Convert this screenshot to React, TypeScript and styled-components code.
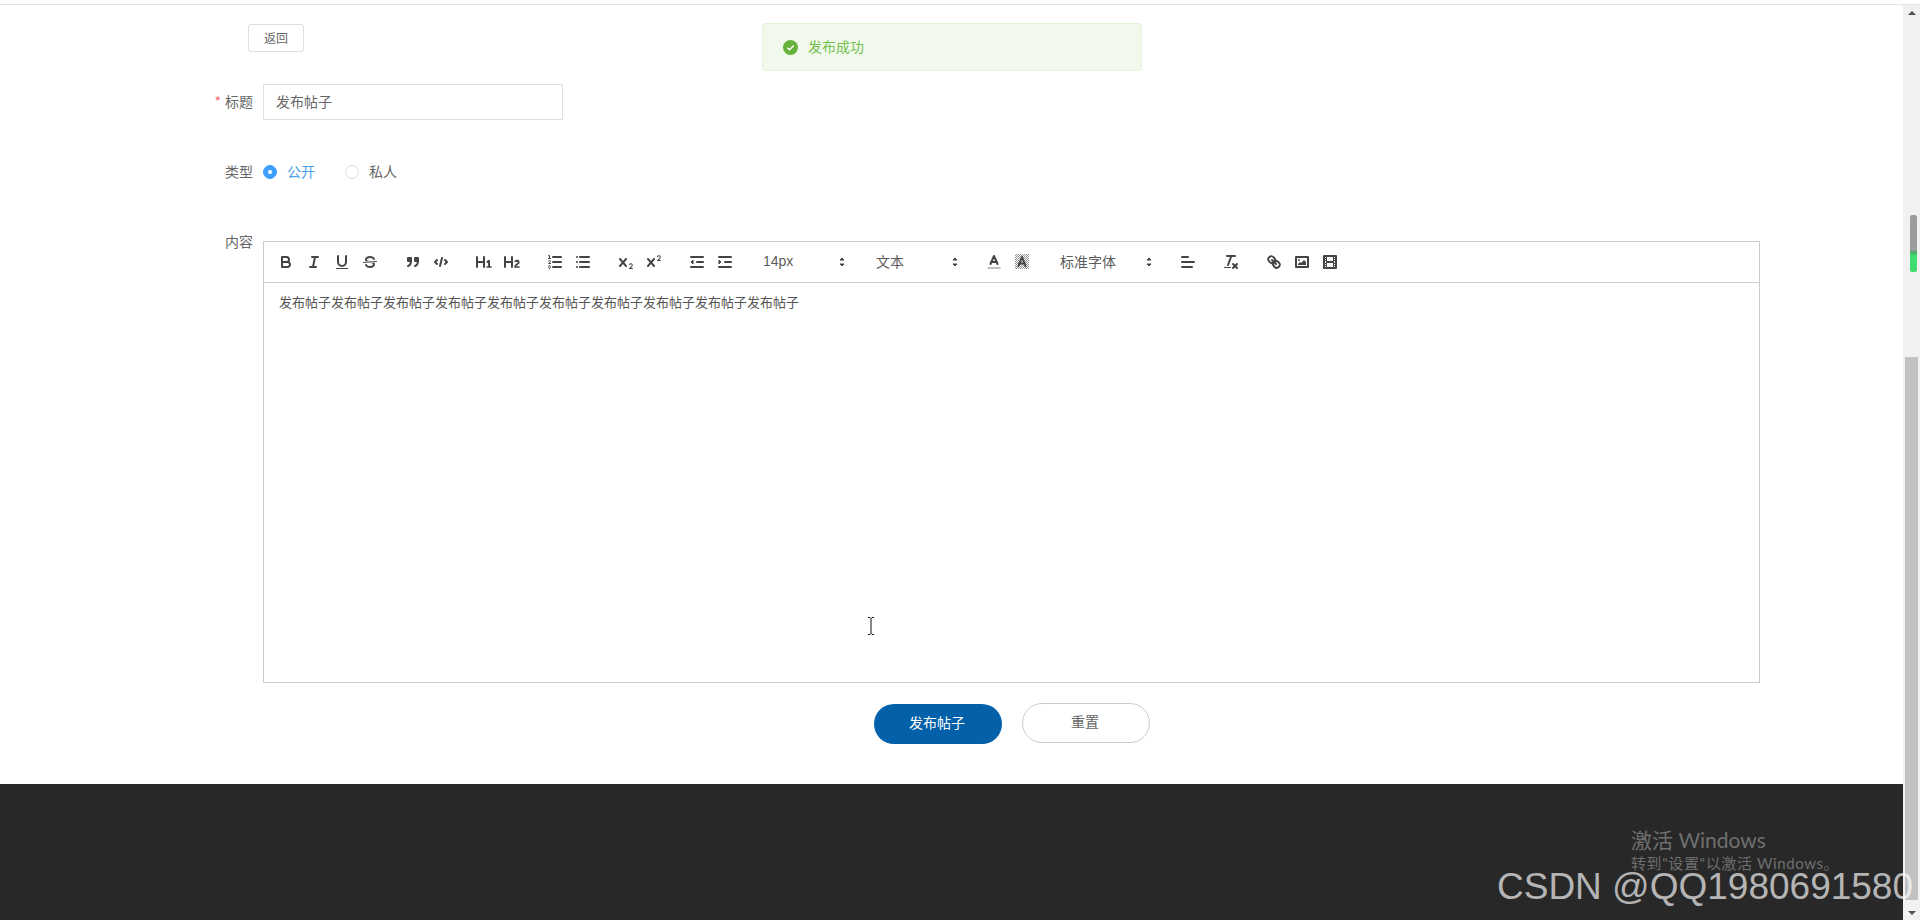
import React from "react";
import styled, { createGlobalStyle } from "styled-components";

const GlobalStyle = createGlobalStyle`
  html, body {
    margin: 0;
    padding: 0;
    height: 100%;
    overflow: hidden;
    background: #fff;
  }
  body {
    font-family: "Noto Sans CJK SC", "Liberation Sans", sans-serif;
    color: #666;
  }
  * { box-sizing: border-box; }
`;

const Root = styled.div`
  position: relative;
  width: 1920px;
  height: 920px;
  overflow: hidden;
  display: flex;
  flex-direction: column;
`;

const TopLine = styled.div`
  height: 5px;
  flex: none;
  border-bottom: 1px solid #e4e4e4;
`;

const Body = styled.div`
  flex: 1;
  display: flex;
  min-height: 0;
`;

const Page = styled.main`
  flex: 1;
  min-width: 0;
  display: flex;
  flex-direction: column;
`;

const Form = styled.form`
  flex: 1;
  padding: 19px 0 0 188px;
  display: flex;
  flex-direction: column;
`;

const BackButton = styled.button`
  width: 56px;
  height: 28px;
  margin: 0 0 30px 60px;
  padding: 0 0 2px;
  background: #fff;
  border: 1px solid #dcdfe6;
  border-radius: 3px;
  color: #666;
  font: 12px "Noto Sans CJK SC", sans-serif;
`;

const Row = styled.div`
  display: flex;
  margin-bottom: 30px;
`;

const Label = styled.label`
  width: 75px;
  height: 40px;
  flex: none;
  padding-right: 10px;
  text-align: right;
  font-size: 14px;
  line-height: 38px;
  color: #666;
`;

const Star = styled.span`
  color: #f56c6c;
  margin-right: 4px;
`;

const Field = styled.div`
  width: 1497px;
  display: flex;
  flex-direction: column;
`;

const TitleInput = styled.input`
  width: 300px;
  height: 36px;
  margin-top: 2px;
  padding: 0 12px 2px;
  border: 1px solid #dcdfe6;
  border-radius: 1px;
  outline: none;
  color: #666;
  font: 14px "Noto Sans CJK SC", sans-serif;
`;

const RadioGroup = styled.div`
  display: flex;
  align-items: center;
  height: 40px;
  gap: 30px;
`;

const RadioItem = styled.span<{ $on?: boolean }>`
  display: flex;
  align-items: center;
  gap: 10px;
  font-size: 14px;
  color: ${(p) => (p.$on ? "#4a9fe8" : "#666")};
`;

const RadioText = styled.span`
  padding-bottom: 2px;
`;

const RadioDot = styled.span<{ $on?: boolean }>`
  width: 14px;
  height: 14px;
  border-radius: 50%;
  display: flex;
  align-items: center;
  justify-content: center;
  border: 1px solid ${(p) => (p.$on ? "#409eff" : "#dcdfe6")};
  background: ${(p) => (p.$on ? "#409eff" : "#fff")};
  &::after {
    content: "";
    width: 4px;
    height: 4px;
    border-radius: 50%;
    background: #fff;
  }
`;

const Editor = styled.div`
  margin-top: 19px;
  height: 442px;
  border: 1px solid #ccc;
  display: flex;
  flex-direction: column;
`;

const Toolbar = styled.div`
  height: 41px;
  flex: none;
  padding: 8px;
  border-bottom: 1px solid #ccc;
  display: flex;
  font-family: "Liberation Sans", "Noto Sans CJK SC", sans-serif;
`;

const Group = styled.span`
  display: flex;
  margin-right: 15px;
`;

const ToolButton = styled.button`
  width: 28px;
  height: 24px;
  padding: 3px 5px;
  background: none;
  border: 0;
  display: block;
`;

const Icon = styled.svg`
  display: block;
  width: 18px;
  height: 18px;
  .s {
    fill: none;
    stroke: #444;
    stroke-width: 2;
    stroke-linecap: round;
    stroke-linejoin: round;
    stroke-miterlimit: 10;
  }
  .t { stroke-width: 1; }
  .f { fill: #444; }
  .c { stroke: #aaa; stroke-width: 1.5; }
`;

const Picker = styled.span<{ $w: number }>`
  position: relative;
  width: ${(p) => p.$w}px;
  height: 24px;
  margin-right: 15px;
  padding: 0 0 2px 9px;
  display: flex;
  align-items: center;
  color: #5c5c5c;
  font-size: 14px;
  svg {
    position: absolute;
    right: 1px;
    top: 3px;
  }
`;

const Content = styled.div`
  padding: 10px 15px;
  font-size: 13px;
  line-height: 1.42;
  color: #555;
`;

const Actions = styled.div`
  display: flex;
  justify-content: center;
  align-items: flex-start;
  gap: 20px;
  margin-top: 20px;
  padding-left: 1px;
`;

const PillButton = styled.button<{ $primary?: boolean }>`
  width: 128px;
  height: 40px;
  margin-top: ${(p) => (p.$primary ? "1px" : "0")};
  padding: 0 2px 4px 0;
  border-radius: 20px;
  border: ${(p) => (p.$primary ? "0" : "1px solid #ccc")};
  background: ${(p) => (p.$primary ? "#0360a9" : "#fff")};
  color: ${(p) => (p.$primary ? "#fff" : "#666")};
  font: 14px "Noto Sans CJK SC", sans-serif;
`;

const Footer = styled.footer`
  height: 136px;
  flex: none;
  background: #282828;
`;

const Scrollbar = styled.aside`
  position: relative;
  width: 17px;
  flex: none;
  background: #f1f1f1;
  display: flex;
  flex-direction: column;
  align-items: center;
`;

const ArrowUp = styled.span`
  margin-top: 6px;
  width: 0;
  height: 0;
  border-left: 4px solid transparent;
  border-right: 4px solid transparent;
  border-bottom: 4px solid #505050;
`;

const ArrowDown = styled.span`
  margin-top: 11px;
  width: 0;
  height: 0;
  border-left: 4px solid transparent;
  border-right: 4px solid transparent;
  border-top: 4px solid #505050;
`;

const Thumb = styled.div`
  width: 13px;
  height: 543px;
  margin-top: 342px;
  background: #c1c1c1;
`;

const Meter = styled.div`
  position: absolute;
  left: 7px;
  top: 210px;
  width: 7px;
  height: 57px;
  border-radius: 2px;
  background: linear-gradient(#9d9d9d 0 35px, #4aa868 37px, #3edd70 41px);
`;

const Toast = styled.div`
  position: absolute;
  left: 762px;
  top: 23px;
  width: 380px;
  height: 48px;
  padding: 0 0 2px 20px;
  display: flex;
  align-items: center;
  gap: 10px;
  background: #f0f9eb;
  border: 1px solid #e1f3d8;
  border-radius: 4px;
  color: #74bf4e;
  font-size: 14px;
`;

const ToastIcon = styled.svg`
  width: 15px;
  height: 15px;
  flex: none;
  margin-top: 2px;
`;

const TextCursor = styled.svg`
  position: absolute;
  left: 866px;
  top: 616px;
  width: 10px;
  height: 20px;
`;

const ActivateNote = styled.div`
  position: absolute;
  left: 1631px;
  top: 826px;
  color: #6f6f6f;
  font-family: "Lato", "Noto Sans CJK SC", sans-serif;
`;

const ActivateTitle = styled.div`
  font-size: 21px;
  line-height: 28px;
`;

const ActivateHint = styled.div`
  margin-top: -1px;
  font-size: 15px;
  line-height: 20px;
  letter-spacing: 0.6px;
`;

const Watermark = styled.div`
  position: absolute;
  left: 1497px;
  top: 865px;
  color: rgba(255, 255, 255, 0.66);
  font: 37px/44px "Liberation Sans", sans-serif;
  white-space: nowrap;
`;

const Svg = ({ children }: { children: React.ReactNode }) => (
  <Icon viewBox="0 0 18 18">{children}</Icon>
);

const Lines = ({ x1, ys }: { x1: number[]; ys: number[] }) => (
  <>
    {ys.map((y, i) => (
      <line key={y} className="s" x1={x1[i]} x2={15} y1={y} y2={y} />
    ))}
  </>
);

const Arrows = () => (
  <Svg>
    <polygon className="f" stroke="#444" strokeLinejoin="round" points="7 11 9 13 11 11 7 11" />
    <polygon className="f" stroke="#444" strokeLinejoin="round" points="7 7 9 5 11 7 7 7" />
  </Svg>
);

const ICONS: Record<string, React.ReactNode> = {
  bold: (
    <>
      <path className="s" d="M5,4H9.5A2.5,2.5,0,0,1,12,6.5v0A2.5,2.5,0,0,1,9.5,9H5A0,0,0,0,1,5,9V4A0,0,0,0,1,5,4Z" />
      <path className="s" d="M5,9h5.5A2.5,2.5,0,0,1,13,11.5v0A2.5,2.5,0,0,1,10.5,14H5a0,0,0,0,1,0,0V9A0,0,0,0,1,5,9Z" />
    </>
  ),
  italic: (
    <>
      <line className="s" x1="7" x2="13" y1="4" y2="4" />
      <line className="s" x1="5" x2="11" y1="14" y2="14" />
      <line className="s" x1="8" x2="10" y1="14" y2="4" />
    </>
  ),
  underline: (
    <>
      <path className="s" d="M5,3V9a4.012,4.012,0,0,0,4,4H9a4.012,4.012,0,0,0,4-4V3" />
      <rect className="f" height="1" rx=".5" ry=".5" width="12" x="3" y="15" />
    </>
  ),
  strike: (
    <>
      <line className="s t" x1="15.5" x2="2.5" y1="8.5" y2="9.5" />
      <path className="f" d="M9.007,8C6.542,7.791,6,7.519,6,6.5,6,5.792,7.283,5,9,5c1.571,0,2.765.679,2.969,1.309a1,1,0,0,0,1.9-.617C13.356,4.106,11.354,3,9,3,6.2,3,4,4.538,4,6.5a3.2,3.2,0,0,0,.5,1.843Z" />
      <path className="f" d="M8.984,10C11.457,10.208,12,10.479,12,11.5c0,.708-1.283,1.5-3,1.5-1.571,0-2.765-.679-2.969-1.309a1,1,0,1,0-1.9.617C4.644,13.894,6.646,15,9,15c2.8,0,5-1.538,5-3.5a3.2,3.2,0,0,0-.5-1.843Z" />
    </>
  ),
  quote: (
    <>
      <rect className="f" stroke="#444" strokeWidth="2" strokeLinejoin="round" height="3" width="3" x="4" y="5" />
      <rect className="f" stroke="#444" strokeWidth="2" strokeLinejoin="round" height="3" width="3" x="11" y="5" />
      <path className="s" d="M7,8c0,4.031-3,5-3,5" />
      <path className="s" d="M14,8c0,4.031-3,5-3,5" />
    </>
  ),
  code: (
    <>
      <polyline className="s" points="5 7 3 9 5 11" />
      <polyline className="s" points="13 7 15 9 13 11" />
      <line className="s" x1="10" x2="8" y1="5" y2="13" />
    </>
  ),
  h1: (
    <path className="f" d="M10,4V14a1,1,0,0,1-2,0V10H3v4a1,1,0,0,1-2,0V4A1,1,0,0,1,3,4V8H8V4a1,1,0,0,1,2,0Zm6.06787,9.209H14.98975V7.59863a.54085.54085,0,0,0-.605-.60547h-.62744a1.01119,1.01119,0,0,0-.748.29688L11.645,8.56641a.5435.5435,0,0,0-.022.8584l.28613.30762a.53861.53861,0,0,0,.84717.0332l.09912-.08789a1.2137,1.2137,0,0,0,.2417-.35254h.02246s-.01123.30859-.01123.60547V13.209H12.041a.54085.54085,0,0,0-.605.60547v.43945a.54085.54085,0,0,0,.605.60547h4.02686a.54085.54085,0,0,0,.605-.60547v-.43945A.54085.54085,0,0,0,16.06787,13.209Z" />
  ),
  h2: (
    <path className="f" d="M16.73975,13.81445v.43945a.54085.54085,0,0,1-.605.60547H11.855a.58392.58392,0,0,1-.64893-.60547V14.0127c0-2.90527,3.39941-3.42187,3.39941-4.55469a.77675.77675,0,0,0-.84717-.78125,1.17684,1.17684,0,0,0-.83594.38477c-.2749.26367-.561.374-.85791.13184l-.4292-.34082c-.30811-.24219-.38525-.51758-.1543-.81445a2.97155,2.97155,0,0,1,2.45361-1.17676,2.45393,2.45393,0,0,1,2.68408,2.40918c0,2.45312-3.1792,2.92676-3.27832,3.93848h2.79443A.54085.54085,0,0,1,16.73975,13.81445ZM9,3A.99974.99974,0,0,0,8,4V8H3V4A1,1,0,0,0,1,4V14a1,1,0,0,0,2,0V10H8v4a1,1,0,0,0,2,0V4A.99974.99974,0,0,0,9,3Z" />
  ),
  ordered: (
    <>
      <Lines x1={[7, 7, 7]} ys={[4, 9, 14]} />
      <line className="s t" x1="2.5" x2="4.5" y1="5.5" y2="5.5" />
      <path className="f" d="M3.5,6A0.5,0.5,0,0,1,3,5.5V3.085l-0.276.138A0.5,0.5,0,0,1,2.053,3c-0.124-.247-0.023-0.324.224-0.447l1-.5A0.5,0.5,0,0,1,4,2.5v3A0.5,0.5,0,0,1,3.5,6Z" />
      <path className="s t" d="M4.5,10.5h-2c0-.234,1.85-1.076,1.85-2.234A0.959,0.959,0,0,0,2.5,8.156" />
      <path className="s t" d="M2.5,14.846a0.959,0.959,0,0,0,1.85-.109A0.7,0.7,0,0,0,3.75,14a0.688,0.688,0,0,0,.6-0.736,0.959,0.959,0,0,0-1.85-.109" />
    </>
  ),
  bullet: (
    <>
      <Lines x1={[6, 6, 6]} ys={[4, 9, 14]} />
      <line className="s" x1="3" x2="3" y1="4" y2="4" />
      <line className="s" x1="3" x2="3" y1="9" y2="9" />
      <line className="s" x1="3" x2="3" y1="14" y2="14" />
    </>
  ),
  sub: (
    <>
      <path className="f" d="M15.5,15H13.861a3.858,3.858,0,0,0,1.914-2.975,1.8,1.8,0,0,0-1.6-1.751A1.921,1.921,0,0,0,12.021,11.7a0.50013,0.50013,0,1,0,.957.291h0a0.914,0.914,0,0,1,1.053-.725,0.81,0.81,0,0,1,.744.762c0,1.076-1.16971,1.86982-1.93971,2.43082A1.45639,1.45639,0,0,0,12,15.5a0.5,0.5,0,0,0,.5.5h3A0.5,0.5,0,0,0,15.5,15Z" />
      <path className="f" d="M9.65,5.241a1,1,0,0,0-1.409.108L6,7.964,3.759,5.349A1,1,0,0,0,2.192,6.59178Q2.21541,6.6213,2.241,6.649L4.684,9.5,2.241,12.35A1,1,0,0,0,3.71,13.70722q0.02557-.02768.049-0.05722L6,11.036,8.241,13.65a1,1,0,1,0,1.567-1.24277Q9.78459,12.3777,9.759,12.35L7.316,9.5,9.759,6.651A1,1,0,0,0,9.65,5.241Z" />
    </>
  ),
  sup: (
    <>
      <path className="f" d="M15.5,7H13.861a4.015,4.015,0,0,0,1.914-2.975,1.8,1.8,0,0,0-1.6-1.751A1.922,1.922,0,0,0,12.021,3.7a0.5,0.5,0,1,0,.957.291,0.917,0.917,0,0,1,1.053-.725,0.81,0.81,0,0,1,.744.762c0,1.077-1.164,1.925-1.934,2.486A1.423,1.423,0,0,0,12,7.5a0.5,0.5,0,0,0,.5.5h3A0.5,0.5,0,0,0,15.5,7Z" />
      <path className="f" d="M9.651,5.241a1,1,0,0,0-1.41.108L6,7.964,3.759,5.349a1,1,0,1,0-1.519,1.3L4.683,9.5,2.241,12.35a1,1,0,1,0,1.519,1.3L6,11.036,8.241,13.65a1,1,0,0,0,1.519-1.3L7.317,9.5,9.759,6.651A1,1,0,0,0,9.651,5.241Z" />
    </>
  ),
  outdent: (
    <>
      <Lines x1={[3, 3, 9]} ys={[14, 4, 9]} />
      <polygon className="f" stroke="#444" strokeLinejoin="round" points="5 7 5 11 3 9 5 7" />
    </>
  ),
  indent: (
    <>
      <Lines x1={[3, 3, 9]} ys={[14, 4, 9]} />
      <polygon className="f" stroke="#444" strokeLinejoin="round" points="3 7 3 11 5 9 3 7" />
    </>
  ),
  color: (
    <>
      <line className="s c" x1="3" x2="15" y1="15" y2="15" />
      <polyline className="s" points="5.5 11 9 3 12.5 11" />
      <line className="s" x1="11.63" x2="6.38" y1="9" y2="9" />
    </>
  ),
  background: (
    <>
      <defs>
        <pattern id="hatch" width="2" height="2" patternUnits="userSpaceOnUse">
          <rect width="1" height="1" fill="#444" opacity=".6" />
          <rect x="1" y="1" width="1" height="1" fill="#444" opacity=".6" />
        </pattern>
      </defs>
      <rect x="2" y="1" width="14" height="15" fill="url(#hatch)" />
      <polyline className="s" points="5.5 13 9 4 12.5 13" />
      <line className="s" x1="11.63" x2="6.38" y1="10.5" y2="10.5" />
    </>
  ),
  align: (
    <>
      <line className="s" x1="3" x2="15" y1="9" y2="9" />
      <line className="s" x1="3" x2="13" y1="14" y2="14" />
      <line className="s" x1="3" x2="9" y1="4" y2="4" />
    </>
  ),
  clean: (
    <>
      <line className="s" x1="5" x2="13" y1="3" y2="3" />
      <line className="s" x1="6" x2="9.35" y1="12" y2="3" />
      <line className="s" x1="11" x2="15" y1="11" y2="15" />
      <line className="s" x1="15" x2="11" y1="11" y2="15" />
      <rect className="f" height="1" rx=".5" ry=".5" width="7" x="2" y="14" />
    </>
  ),
  link: (
    <>
      <line className="s" x1="7" x2="11" y1="7" y2="11" />
      <path className="s" d="M8.9,4.577a3.476,3.476,0,0,1,.36,4.679A3.476,3.476,0,0,1,4.577,8.9C3.185,7.5,2.035,6.4,4.217,4.217S7.5,3.185,8.9,4.577Z" />
      <path className="s" d="M13.423,9.1a3.476,3.476,0,0,0-4.679-.36,3.476,3.476,0,0,0,.36,4.679c1.392,1.392,2.5,2.542,4.679.36S14.815,10.5,13.423,9.1Z" />
    </>
  ),
  image: (
    <>
      <rect className="s" height="10" width="12" x="3" y="4" />
      <circle className="f" cx="6" cy="7" r="1" />
      <polyline className="f" points="5 12 5 11 7 9 8 10 11 7 13 9 13 12 5 12" />
    </>
  ),
  video: (
    <>
      <rect className="s" height="12" width="12" x="3" y="3" />
      <rect className="f" height="12" width="1" x="5" y="3" />
      <rect className="f" height="12" width="1" x="12" y="3" />
      <rect className="f" height="2" width="8" x="5" y="8" />
      <rect className="f" height="1" width="3" x="3" y="5" />
      <rect className="f" height="1" width="3" x="3" y="7" />
      <rect className="f" height="1" width="3" x="3" y="10" />
      <rect className="f" height="1" width="3" x="3" y="12" />
      <rect className="f" height="1" width="3" x="12" y="5" />
      <rect className="f" height="1" width="3" x="12" y="7" />
      <rect className="f" height="1" width="3" x="12" y="10" />
      <rect className="f" height="1" width="3" x="12" y="12" />
    </>
  ),
};

const ToolGroup = ({ names }: { names: string[] }) => (
  <Group>
    {names.map((n) => (
      <ToolButton type="button" key={n} aria-label={n}>
        <Svg>{ICONS[n]}</Svg>
      </ToolButton>
    ))}
  </Group>
);

const FontPicker = ({ w, label }: { w: number; label: string }) => (
  <Picker $w={w}>
    {label}
    <Arrows />
  </Picker>
);

export default function App() {
  return (
    <Root>
      <GlobalStyle />
      <TopLine />
      <Body>
        <Page>
          <Form onSubmit={(e) => e.preventDefault()}>
            <BackButton type="button">返回</BackButton>
            <Row>
              <Label>
                <Star>*</Star>标题
              </Label>
              <Field>
                <TitleInput readOnly value="发布帖子" />
              </Field>
            </Row>
            <Row>
              <Label>类型</Label>
              <Field>
                <RadioGroup>
                  <RadioItem $on>
                    <RadioDot $on />
                    <RadioText>公开</RadioText>
                  </RadioItem>
                  <RadioItem>
                    <RadioDot />
                    <RadioText>私人</RadioText>
                  </RadioItem>
                </RadioGroup>
              </Field>
            </Row>
            <Row>
              <Label>内容</Label>
              <Field>
                <Editor>
                  <Toolbar>
                    <ToolGroup names={["bold", "italic", "underline", "strike"]} />
                    <ToolGroup names={["quote", "code"]} />
                    <ToolGroup names={["h1", "h2"]} />
                    <ToolGroup names={["ordered", "bullet"]} />
                    <ToolGroup names={["sub", "sup"]} />
                    <ToolGroup names={["outdent", "indent"]} />
                    <FontPicker w={98} label="14px" />
                    <FontPicker w={98} label="文本" />
                    <ToolGroup names={["color", "background"]} />
                    <FontPicker w={108} label="标准字体" />
                    <ToolGroup names={["align"]} />
                    <ToolGroup names={["clean"]} />
                    <ToolGroup names={["link", "image", "video"]} />
                  </Toolbar>
                  <Content>{"发布帖子".repeat(10)}</Content>
                </Editor>
                <Actions>
                  <PillButton $primary type="submit">发布帖子</PillButton>
                  <PillButton type="reset">重置</PillButton>
                </Actions>
              </Field>
            </Row>
          </Form>
          <Footer />
        </Page>
        <Scrollbar>
          <ArrowUp />
          <Thumb />
          <ArrowDown />
          <Meter />
        </Scrollbar>
      </Body>

      <Toast>
        <ToastIcon viewBox="0 0 16 16">
          <circle cx="8" cy="8" r="8" fill="#67b23a" />
          <polyline points="4.6 8.2 7 10.5 11.4 5.9" fill="none" stroke="#fff" strokeWidth="1.5" />
        </ToastIcon>
        发布成功
      </Toast>

      <TextCursor viewBox="0 0 10 20">
        <path d="M2 1.5h2l1 1 1-1h2M5 2.5v15M2 18.5h2l1-1 1 1h2" fill="none" stroke="#111" />
      </TextCursor>

      <ActivateNote>
        <ActivateTitle>激活 Windows</ActivateTitle>
        <ActivateHint>转到"设置"以激活 Windows。</ActivateHint>
      </ActivateNote>
      <Watermark>CSDN @QQ1980691580</Watermark>
    </Root>
  );
}
